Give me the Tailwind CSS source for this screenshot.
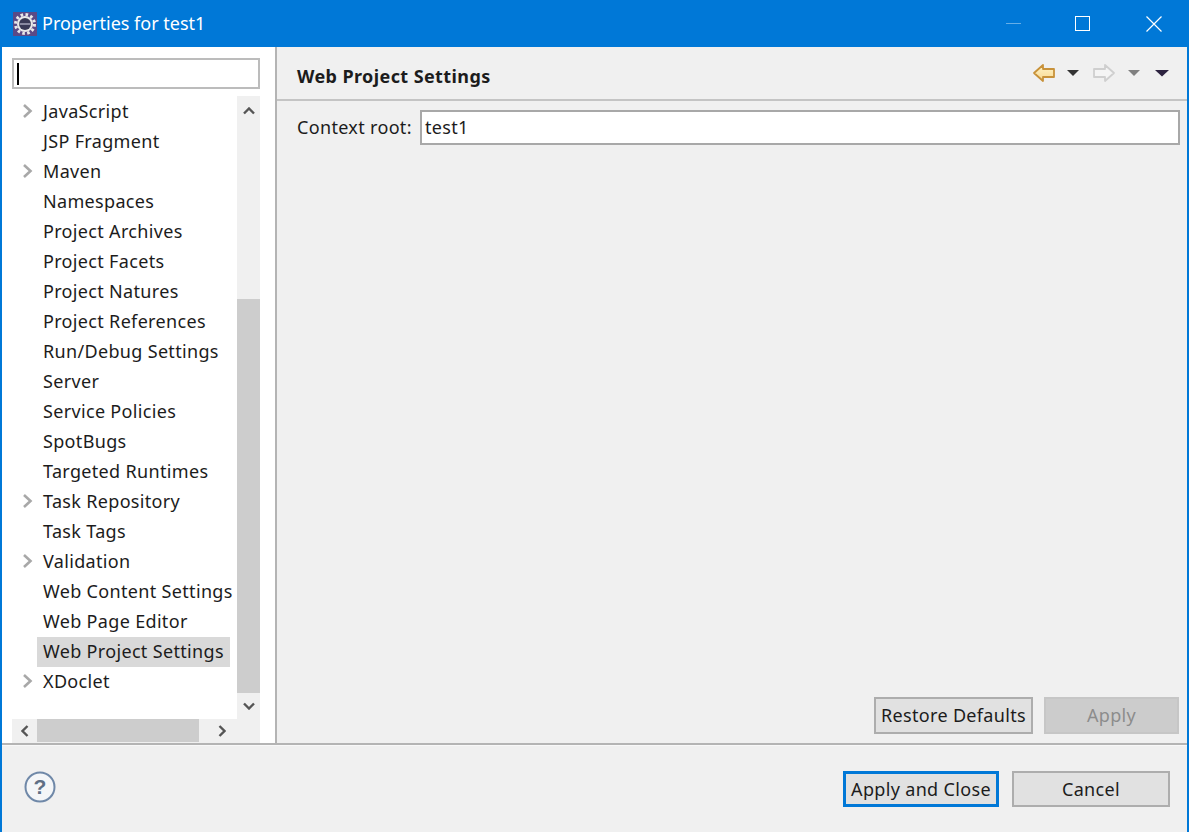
<!DOCTYPE html>
<html>
<head>
<meta charset="utf-8">
<script src="https://cdn.jsdelivr.net/npm/@tailwindcss/browser@4"></script>
</head>
<body class="m-0 overflow-hidden">
<div class="w-[1189px] h-[832px] flex flex-col bg-[#f0f0f0] border-x-2 border-b-0 border-[#0078d7] font-['Noto_Sans','Open_Sans',sans-serif] text-[18px] tracking-[0.33px] text-[#1c1c1c] overflow-hidden">
  <!-- title bar -->
  <div class="h-[47px] shrink-0 -mx-[2px] bg-[#0078d7] flex items-center pl-[13px] text-white">
    <svg width="24" height="24" viewBox="0 0 24 24" class="shrink-0">
      <rect width="24" height="24" fill="#5a4a86"/>
      <circle cx="12" cy="12" r="9.5" fill="none" stroke="#e8e8e8" stroke-width="3" stroke-dasharray="2.6 2.4"/>
      <circle cx="12" cy="12" r="8" fill="#e8e8e8"/>
      <circle cx="12" cy="12" r="6" fill="#3a3a55"/>
      <rect x="6.5" y="11" width="11" height="2" fill="#8a8aa0"/>
    </svg>
    <span class="ml-[5px] -mt-[2px] text-[18px] tracking-normal leading-none">Properties for test1</span>
    <div class="ml-auto flex items-center h-full">
      <div class="w-[15px] h-px bg-white/40 mr-[54px]"></div>
      <div class="w-[15px] h-[15px] border-[1.5px] border-white mr-[56px]"></div>
      <svg width="16" height="16" viewBox="0 0 16 16" class="mr-[27px]"><path d="M0.5 0.5L15.5 15.5M15.5 0.5L0.5 15.5" stroke="#fff" stroke-width="1.2"/></svg>
    </div>
  </div>
  <!-- body -->
  <div class="flex-1 flex min-h-0 border-b-2 border-[#b4b4b4]">
    <!-- left -->
    <div class="w-[275px] shrink-0 bg-white flex flex-col pl-[10px] border-r-2 border-[#b4b4b4]">
      <div class="w-[248px] h-[31px] mt-[11px] border-2 border-[#bcbcbc] bg-white flex items-center pl-[3px] shrink-0">
        <div class="w-[2px] h-[22px] bg-black"></div>
      </div>
      <div class="w-[248px] mt-[7px] flex-1 flex flex-col min-h-0 bg-[#f0f0f0]">
        <div class="flex-1 flex min-h-0">
          <div class="w-[225px] bg-white text-[18px] overflow-hidden">
            <div class="h-[30px] flex items-center"><svg width="12" height="14" viewBox="0 0 12 14" class="ml-[10px] mr-[9px] shrink-0"><path d="M2 1L8.5 7L2 13" fill="none" stroke="#a8a8a8" stroke-width="2.6"/></svg><span>JavaScript</span></div>
            <div class="h-[30px] flex items-center pl-[31px]">JSP Fragment</div>
            <div class="h-[30px] flex items-center"><svg width="12" height="14" viewBox="0 0 12 14" class="ml-[10px] mr-[9px] shrink-0"><path d="M2 1L8.5 7L2 13" fill="none" stroke="#a8a8a8" stroke-width="2.6"/></svg><span>Maven</span></div>
            <div class="h-[30px] flex items-center pl-[31px]">Namespaces</div>
            <div class="h-[30px] flex items-center pl-[31px]">Project Archives</div>
            <div class="h-[30px] flex items-center pl-[31px]">Project Facets</div>
            <div class="h-[30px] flex items-center pl-[31px]">Project Natures</div>
            <div class="h-[30px] flex items-center pl-[31px]">Project References</div>
            <div class="h-[30px] flex items-center pl-[31px]">Run/Debug Settings</div>
            <div class="h-[30px] flex items-center pl-[31px]">Server</div>
            <div class="h-[30px] flex items-center pl-[31px]">Service Policies</div>
            <div class="h-[30px] flex items-center pl-[31px]">SpotBugs</div>
            <div class="h-[30px] flex items-center pl-[31px]">Targeted Runtimes</div>
            <div class="h-[30px] flex items-center"><svg width="12" height="14" viewBox="0 0 12 14" class="ml-[10px] mr-[9px] shrink-0"><path d="M2 1L8.5 7L2 13" fill="none" stroke="#a8a8a8" stroke-width="2.6"/></svg><span>Task Repository</span></div>
            <div class="h-[30px] flex items-center pl-[31px]">Task Tags</div>
            <div class="h-[30px] flex items-center"><svg width="12" height="14" viewBox="0 0 12 14" class="ml-[10px] mr-[9px] shrink-0"><path d="M2 1L8.5 7L2 13" fill="none" stroke="#a8a8a8" stroke-width="2.6"/></svg><span>Validation</span></div>
            <div class="h-[30px] flex items-center pl-[31px] whitespace-nowrap">Web Content Settings</div>
            <div class="h-[30px] flex items-center pl-[31px]">Web Page Editor</div>
            <div class="h-[30px] mt-[1px] -mb-[1px] pb-[2px] flex items-center ml-[25px] pl-[6px] mr-[7px] bg-[#d9d9d9] whitespace-nowrap">Web Project Settings</div>
            <div class="h-[30px] flex items-center"><svg width="12" height="14" viewBox="0 0 12 14" class="ml-[10px] mr-[9px] shrink-0"><path d="M2 1L8.5 7L2 13" fill="none" stroke="#a8a8a8" stroke-width="2.6"/></svg><span>XDoclet</span></div>
          </div>
          <!-- v scrollbar -->
          <div class="w-[23px] flex flex-col">
            <div class="h-[29px] flex items-center justify-center"><svg width="12" height="8" viewBox="0 0 12 8"><path d="M1 6.5L6 1.5L11 6.5" fill="none" stroke="#555" stroke-width="2.4"/></svg></div>
            <div class="h-[174px]"></div>
            <div class="h-[394px] bg-[#cdcdcd]"></div>
            <div class="h-[26px] flex items-center justify-center"><svg width="12" height="8" viewBox="0 0 12 8"><path d="M1 1.5L6 6.5L11 1.5" fill="none" stroke="#555" stroke-width="2.4"/></svg></div>
          </div>
        </div>
        <!-- h scrollbar -->
        <div class="h-[24px] flex items-center shrink-0 pb-[1px]">
          <div class="w-[25px] flex justify-center"><svg width="8" height="12" viewBox="0 0 8 12"><path d="M6.5 1L1.5 6L6.5 11" fill="none" stroke="#555" stroke-width="2.4"/></svg></div>
          <div class="w-[162px] h-full bg-[#cdcdcd]"></div>
          <div class="w-[46px] flex justify-center"><svg width="8" height="12" viewBox="0 0 8 12"><path d="M1.5 1L6.5 6L1.5 11" fill="none" stroke="#555" stroke-width="2.4"/></svg></div>
        </div>
      </div>
    </div>
    <!-- right -->
    <div class="flex-1 flex flex-col min-w-0">
      <div class="h-[54px] shrink-0 border-b-2 border-[#c4c4c4] flex items-center pl-[20px] pr-[17px]">
        <span class="font-bold text-[18px] tracking-[0.4px] mt-[6px]">Web Project Settings</span>
        <div class="ml-auto flex items-center">
          <svg width="24" height="20" viewBox="0 0 24 20"><defs><linearGradient id="ga" x1="0" y1="0" x2="0" y2="1"><stop offset="0" stop-color="#fff4c8"/><stop offset="1" stop-color="#f8d890"/></linearGradient></defs><path d="M11 2L2 10L11 18V14H22V6H11Z" fill="url(#ga)" stroke="#c8923a" stroke-width="1.8" stroke-linejoin="round"/></svg>
          <svg width="14" height="8" viewBox="0 0 14 8" class="ml-[10px]"><path d="M1 1H13L7 7Z" fill="#333"/></svg>
          <svg width="24" height="20" viewBox="0 0 24 20" class="ml-[12px]"><path d="M13 2L22 10L13 18V14H2V6H13Z" fill="#f4f4f4" stroke="#cfcfcf" stroke-width="1.8" stroke-linejoin="round"/></svg>
          <svg width="14" height="8" viewBox="0 0 14 8" class="ml-[11px]"><path d="M1 1H13L7 7Z" fill="#808080"/></svg>
          <svg width="16" height="8" viewBox="0 0 16 8" class="ml-[13px]"><path d="M1 1H15L8 7.5Z" fill="#2d2340"/></svg>
        </div>
      </div>
      <div class="flex items-center mt-[9px] pl-[20px] pr-[7px]">
        <span class="w-[123px] shrink-0 whitespace-nowrap">Context root:</span>
        <div class="flex-1 h-[35px] border-2 border-[#a8a8a8] bg-white flex items-center pl-[3px]">test1</div>
      </div>
      <div class="mt-auto flex justify-end gap-[11px] pr-[8px] mb-[9px]">
        <div class="w-[159px] h-[37px] bg-[#e1e1e1] border-2 border-[#adadad] flex items-center justify-center whitespace-nowrap">Restore Defaults</div>
        <div class="w-[135px] h-[37px] bg-[#cccccc] border-2 border-[#c6c6c6] flex items-center justify-center text-[#8c8c8c]">Apply</div>
      </div>
    </div>
  </div>
  <!-- footer -->
  <div class="h-[87px] shrink-0 flex items-start pl-[22px] pr-[17px] pt-[25px] border-t border-[#f8f8f8]">
    <svg width="32" height="32" viewBox="0 0 32 32"><circle cx="16" cy="16" r="14.5" fill="#f4f6f8" stroke="#6f88a8" stroke-width="2"/><text x="16" y="23" text-anchor="middle" font-family="Liberation Sans, sans-serif" font-weight="700" font-size="21" fill="#5f6f85">?</text></svg>
    <div class="ml-auto flex gap-[13px]">
      <div class="w-[156px] h-[36px] bg-[#e1e1e1] border-[3px] border-[#0078d7] flex items-center justify-center whitespace-nowrap">Apply and Close</div>
      <div class="w-[158px] h-[36px] bg-[#e1e1e1] border-2 border-[#adadad] flex items-center justify-center">Cancel</div>
    </div>
  </div>
</div>
</body>
</html>
